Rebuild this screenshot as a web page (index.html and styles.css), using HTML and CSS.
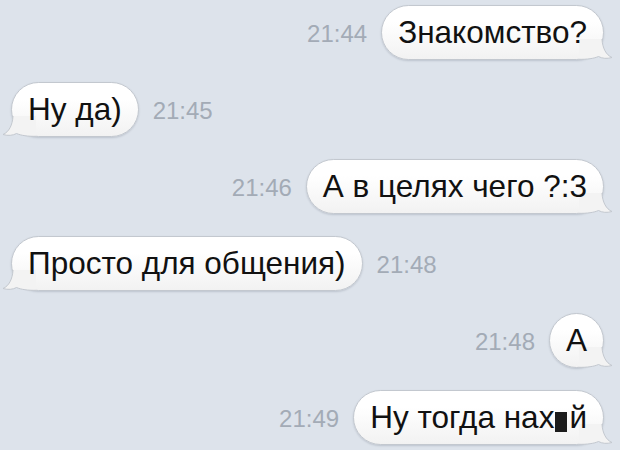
FILE: index.html
```html
<!DOCTYPE html>
<html lang="ru">
<head>
<meta charset="utf-8">
<title>Chat</title>
<link rel="stylesheet" href="styles.css">
</head>
<body>
<div class="chat">
  <div class="row out">
    <span class="time">21:44</span>
    <div class="bubble"><span class="txt">Знакомство?</span><svg class="tail" viewBox="0 0 34 24" width="34" height="24"><path d="M0 3 L23 3 C23.5 12 27 19 33 21.5 C28 23 23 22.5 19.5 20.5 C15 22.5 8 23.5 0 23.3 Z" fill="#f3f3f3"/><path d="M23 3 C23.5 12 27 19 33 21.5 C28 23 23 22.5 19.5 20.5 C15 22.5 8 23.5 0 23.3" fill="none" stroke="#c3c8cf" stroke-width="1"/></svg></div>
  </div>
  <div class="row in">
    <div class="bubble"><span class="txt">Ну да)</span><svg class="tail" viewBox="0 0 34 24" width="34" height="24"><path d="M0 3 L23 3 C23.5 12 27 19 33 21.5 C28 23 23 22.5 19.5 20.5 C15 22.5 8 23.5 0 23.3 Z" fill="#f3f3f3"/><path d="M23 3 C23.5 12 27 19 33 21.5 C28 23 23 22.5 19.5 20.5 C15 22.5 8 23.5 0 23.3" fill="none" stroke="#c3c8cf" stroke-width="1"/></svg></div>
    <span class="time">21:45</span>
  </div>
  <div class="row out">
    <span class="time">21:46</span>
    <div class="bubble"><span class="txt">А в целях чего ?:3</span><svg class="tail" viewBox="0 0 34 24" width="34" height="24"><path d="M0 3 L23 3 C23.5 12 27 19 33 21.5 C28 23 23 22.5 19.5 20.5 C15 22.5 8 23.5 0 23.3 Z" fill="#f3f3f3"/><path d="M23 3 C23.5 12 27 19 33 21.5 C28 23 23 22.5 19.5 20.5 C15 22.5 8 23.5 0 23.3" fill="none" stroke="#c3c8cf" stroke-width="1"/></svg></div>
  </div>
  <div class="row in">
    <div class="bubble"><span class="txt">Просто для общения)</span><svg class="tail" viewBox="0 0 34 24" width="34" height="24"><path d="M0 3 L23 3 C23.5 12 27 19 33 21.5 C28 23 23 22.5 19.5 20.5 C15 22.5 8 23.5 0 23.3 Z" fill="#f3f3f3"/><path d="M23 3 C23.5 12 27 19 33 21.5 C28 23 23 22.5 19.5 20.5 C15 22.5 8 23.5 0 23.3" fill="none" stroke="#c3c8cf" stroke-width="1"/></svg></div>
    <span class="time">21:48</span>
  </div>
  <div class="row out">
    <span class="time">21:48</span>
    <div class="bubble"><span class="txt">А</span><svg class="tail" viewBox="0 0 34 24" width="34" height="24"><path d="M0 3 L23 3 C23.5 12 27 19 33 21.5 C28 23 23 22.5 19.5 20.5 C15 22.5 8 23.5 0 23.3 Z" fill="#f3f3f3"/><path d="M23 3 C23.5 12 27 19 33 21.5 C28 23 23 22.5 19.5 20.5 C15 22.5 8 23.5 0 23.3" fill="none" stroke="#c3c8cf" stroke-width="1"/></svg></div>
  </div>
  <div class="row out">
    <span class="time">21:49</span>
    <div class="bubble"><span class="txt">Ну тогда нах<span class="censor"></span>й</span><svg class="tail" viewBox="0 0 34 24" width="34" height="24"><path d="M0 3 L23 3 C23.5 12 27 19 33 21.5 C28 23 23 22.5 19.5 20.5 C15 22.5 8 23.5 0 23.3 Z" fill="#f3f3f3"/><path d="M23 3 C23.5 12 27 19 33 21.5 C28 23 23 22.5 19.5 20.5 C15 22.5 8 23.5 0 23.3" fill="none" stroke="#c3c8cf" stroke-width="1"/></svg></div>
  </div>
</div>
</body>
</html>
```
FILE: styles.css
```css
html, body {
  margin: 0;
  height: 100%;
}
body {
  background: #dde3eb;
  font-family: "Liberation Sans", Arial, sans-serif;
  overflow: hidden;
}
.chat {
  display: flex;
  flex-direction: column;
  gap: 22px;
  padding: 5px 16px 0 11px;
}
.row {
  display: flex;
  align-items: center;
  gap: 14px;
}
.row.out {
  justify-content: flex-end;
}
.bubble {
  position: relative;
  box-sizing: border-box;
  height: 55px;
  padding: 0 16px 1px;
  display: flex;
  align-items: center;
  font-size: 31.5px;
  color: #111;
  border-radius: 28px;
  background: linear-gradient(#ffffff 30%, #f2f2f2);
  border: 1px solid #c3c8cf;
  box-shadow: 0 1px 2px rgba(60, 70, 90, 0.2);
}
.txt {
  position: relative;
  z-index: 1;
  white-space: nowrap;
}
.time {
  font-size: 24px;
  color: #a3abb6;
  padding-top: 2px;
}
.censor {
  display: inline-block;
  width: 12px;
  height: 20px;
  margin: 0 2px 0 1px;
  background: #1c1c1c;
  vertical-align: -4px;
}
.tail {
  position: absolute;
  bottom: -1px;
  z-index: 0;
}
.out .tail {
  right: -10px;
}
.in .tail {
  left: -10px;
  transform: scaleX(-1);
}
```
